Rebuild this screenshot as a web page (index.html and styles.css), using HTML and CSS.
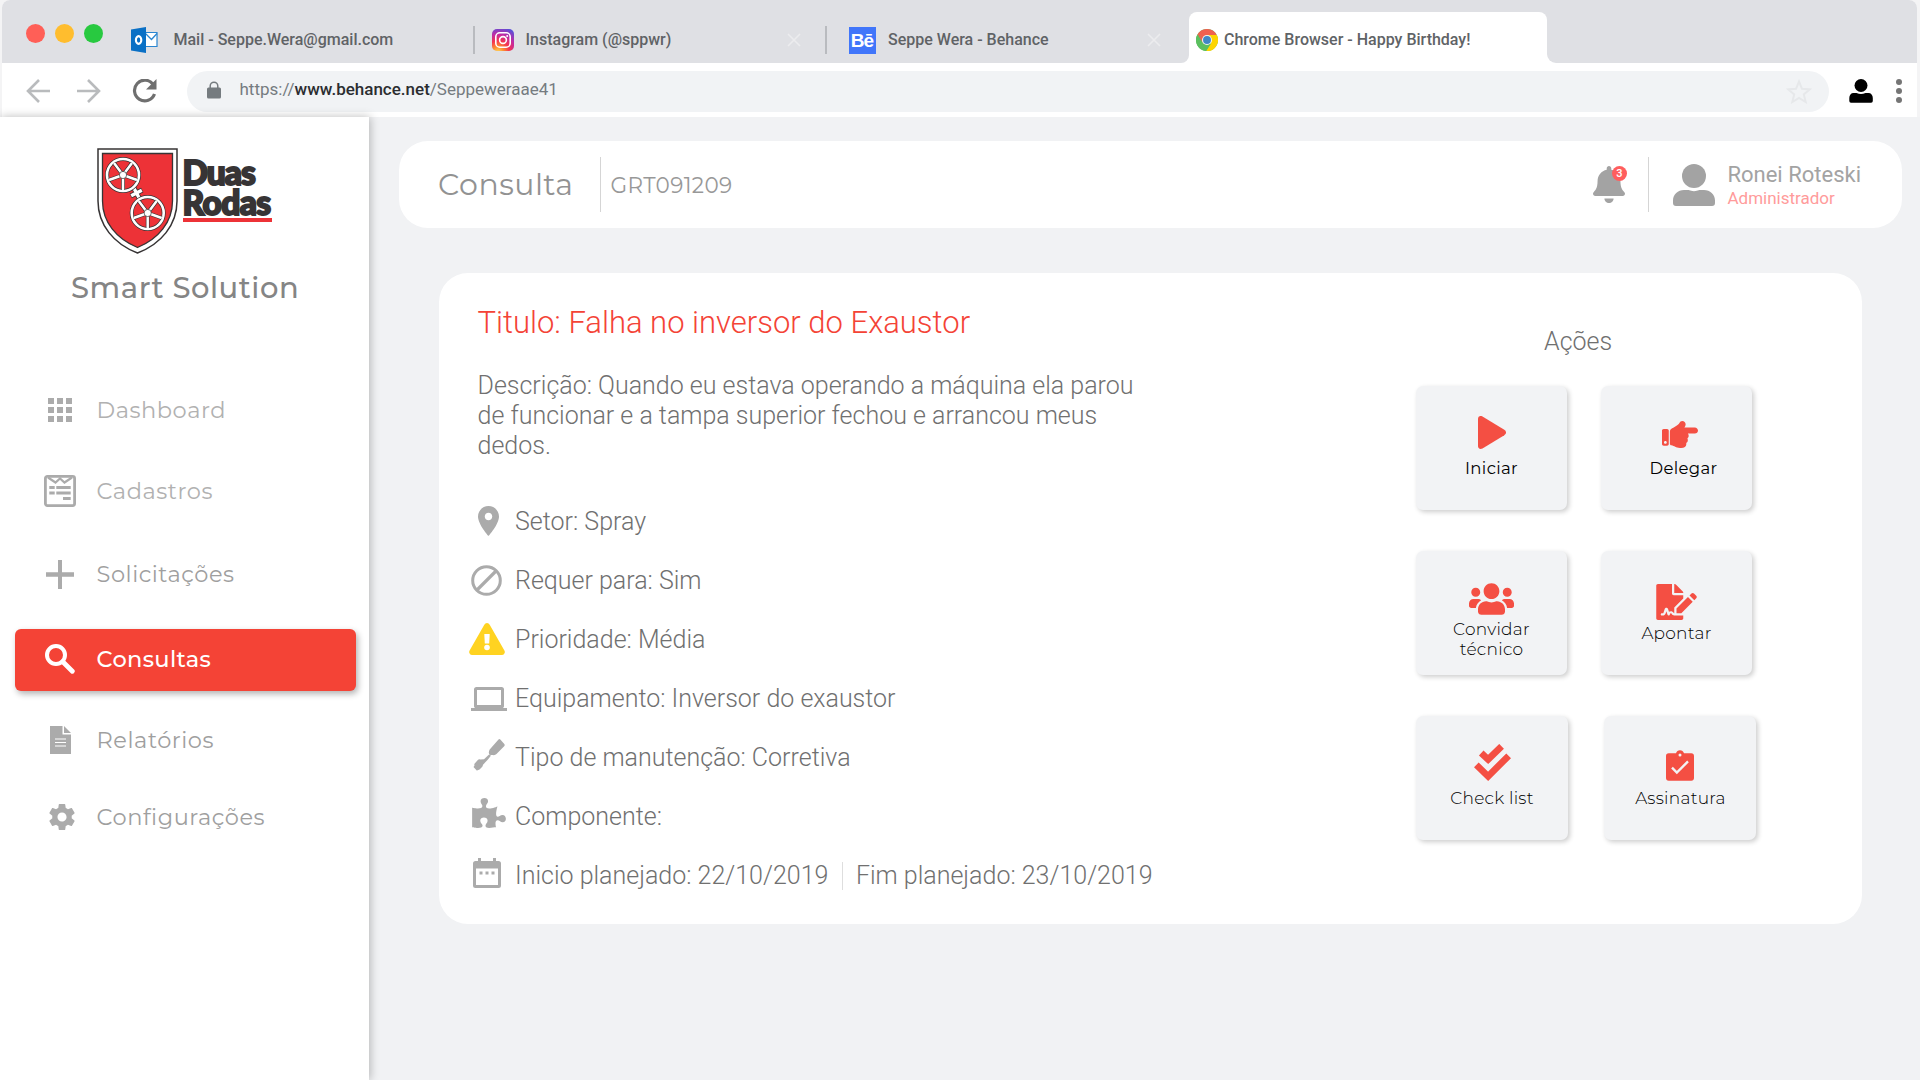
FILE: index.html
```html
<!DOCTYPE html>
<html lang="pt-BR">
<head>
<meta charset="utf-8">
<title>Smart Solution - Consulta</title>
<link rel="stylesheet" href="styles.css">
</head>
<body>
<header class="browser">
  <div class="tabstrip">
    <div class="tabs-left">
      <div class="lights"><i class="light red"></i><i class="light yellow"></i><i class="light green"></i></div>
      <div class="tab tab-mail">
        <svg width="27" height="26" viewBox="0 0 27 26"><path d="M14 5.500h12v14H14z" fill="#fff" stroke="#2a86d1" stroke-width="1.200"/><path d="M14.500 6.500l6 6 5.500-6" fill="none" stroke="#2a86d1" stroke-width="1.300"/><path d="M0 2.500L15 0v26L0 23.500z" fill="#0a70c5"/><ellipse cx="7.600" cy="13" rx="2.700" ry="3.900" fill="none" stroke="#fff" stroke-width="2.100"/></svg>
        <span>Mail - Seppe.Wera@gmail.com</span>
      </div>
      <i class="tab-sep"></i>
      <div class="tab tab-insta">
        <svg width="22" height="22" viewBox="0 0 22 22"><defs><radialGradient id="ig" cx=".28" cy="1.050" r="1.150"><stop offset="0" stop-color="#ffd95a"/><stop offset=".22" stop-color="#fd8d32"/><stop offset=".45" stop-color="#f5344f"/><stop offset=".7" stop-color="#c32aa3"/><stop offset="1" stop-color="#5a4fd8"/></radialGradient></defs><rect width="22" height="22" rx="5" fill="url(#ig)"/><rect x="3.800" y="3.800" width="14.400" height="14.400" rx="4" fill="none" stroke="#fff" stroke-width="1.600"/><circle cx="11" cy="11" r="3.400" fill="none" stroke="#fff" stroke-width="1.600"/><circle cx="15.200" cy="6.900" r="1" fill="#fff"/></svg>
        <span>Instagram (@sppwr)</span>
        <svg class="close" width="14" height="14" viewBox="0 0 14 14"><path d="M1 1l12 12M13 1L1 13"/></svg>
      </div>
      <i class="tab-sep"></i>
      <div class="tab tab-behance">
        <b class="behance">Bē</b>
        <span>Seppe Wera - Behance</span>
        <svg class="close" width="14" height="14" viewBox="0 0 14 14"><path d="M1 1l12 12M13 1L1 13"/></svg>
      </div>
    </div>
    <div class="tab-active">
      <svg width="22" height="22" viewBox="0 0 48 48"><circle cx="24" cy="24" r="24" fill="#5bbf5f"/><path d="M24 24L3.200 12A24 24 0 0 1 44.800 12z" fill="#f0604f"/><path d="M24 13h21.300A24 24 0 0 1 22 48l11-18z" fill="#fdd400"/><path d="M3.200 12L14 30l10-6z" fill="#f0604f"/><path d="M3.200 12A24 24 0 0 0 22 48l11-17-19-2z" fill="#5bbf5f"/><circle cx="24" cy="24" r="11" fill="#f1f1f1"/><circle cx="24" cy="24" r="8.600" fill="#3f87c6"/></svg>
      <span>Chrome Browser - Happy Birthday!</span>
    </div>
    <div class="tabs-right"></div>
  </div>
  <div class="toolbar">
    <svg class="nav-back" width="24" height="24" viewBox="0 0 24 24"><path d="M24 12H2M13 1L2 12l11 11"/></svg>
    <svg class="nav-fwd" width="24" height="24" viewBox="0 0 24 24"><path d="M0 12h22M11 1l11 11-11 11"/></svg>
    <svg class="nav-reload" width="25" height="24" viewBox="0 0 25 24"><path d="M21.200 5.500A10.300 10.300 0 1 0 22.500 15" fill="none" stroke="#6f6f6f" stroke-width="3.200"/><path d="M24.500 0v10.500H14z" fill="#6f6f6f"/></svg>
    <div class="address">
      <svg width="14" height="18" viewBox="0 0 14 18"><rect y="6.500" width="14" height="11" rx="1.500" fill="#757b7f"/><path d="M3.200 8V5a3.800 3.800 0 0 1 7.600 0v3" fill="none" stroke="#757b7f" stroke-width="1.500"/></svg>
      <span class="url">https://<b>www.behance.net</b>/Seppeweraae41</span>
      <svg class="star" width="26" height="25" viewBox="0 0 26 25"><path d="M13 2.500l3 7.300 7.700.6-5.900 5 1.900 7.600L13 18.900 6.300 23l1.900-7.600-5.900-5 7.700-.6z" fill="none" stroke="#e6e8ea" stroke-width="2"/></svg>
    </div>
    <svg class="profile" width="24" height="24" viewBox="0 0 24 24"><ellipse cx="12" cy="6.500" rx="6.500" ry="6.500"/><path d="M4.500 14h3c3 1.300 6 1.300 9 0h3C22 14 23.800 16 23.800 19v3a1.700 1.700 0 0 1-1.700 1.700H2A1.700 1.700 0 0 1 .3 22v-3C.3 16 2 14 4.500 14z"/></svg>
    <svg class="dots" width="6" height="24" viewBox="0 0 6 24"><circle cx="3" cy="3" r="3"/><circle cx="3" cy="12" r="3"/><circle cx="3" cy="21" r="3"/></svg>
  </div>
</header>
<div class="app">
  <aside class="sidebar">
    <div class="logo">
      <svg width="82" height="106" viewBox="0 0 82 106">
        <path d="M1 1h79v52c0 24-16 43-39.500 52C17 96 1 77 1 53z" fill="#fff" stroke="#373435" stroke-width="1.500"/>
        <path d="M5.500 5.500h70V53c0 21-14 38-35 46.500C19.500 91 5.500 74 5.500 53z" fill="#ed3237" stroke="#373435" stroke-width="1.300"/>
        <g transform="translate(39.500 45) rotate(-28)"><path d="M0-6.500V6.500M-6.500 0H6.500" stroke="#373435" stroke-width="5"/><path d="M0-6V6M-6 0H6" stroke="#fff" stroke-width="3.400"/></g>
        <g id="wheel" fill="none">
          <circle cx="26" cy="27" r="16" stroke="#373435" stroke-width="4"/><circle cx="26" cy="27" r="16" stroke="#fff" stroke-width="2.600"/>
          <path d="M26 27v15M26 27l14 5M26 27l9-12M26 27l-9-12M26 27l-14 5" stroke="#373435" stroke-width="3.800"/>
          <path d="M26 27v15M26 27l14 5M26 27l9-12M26 27l-9-12M26 27l-14 5" stroke="#fff" stroke-width="2.500"/>
          <circle cx="26" cy="27" r="3.600" fill="#fff" stroke="#373435" stroke-width=".7"/>
        </g>
        <use href="#wheel" x="24.700" y="38"/>
      </svg>
      <div class="wordmark"><span class="duas">Duas</span><span class="rodas">Rodas</span></div>
    </div>
    <div class="product">Smart Solution</div>
    <nav class="menu">
      <a class="item dashboard"><span class="ico"><svg width="24" height="24" viewBox="0 0 24 24"><path d="M0 0h6v6H0zM9 0h6v6H9zM18 0h6v6h-6zM0 9h6v6H0zM9 9h6v6H9zM18 9h6v6h-6zM0 18h6v6H0zM9 18h6v6H9zM18 18h6v6h-6z"/></svg></span>Dashboard</a>
      <a class="item cadastros"><span class="ico"><svg width="32" height="32" viewBox="0 0 32 32"><rect x="1.400" y="1.400" width="29.200" height="29.200" rx="2" fill="none" stroke="#ababab" stroke-width="2.800"/><path d="M4 2.500l7.500 5L16 3.500l4.500 4L28 2.500" fill="none" stroke="#ababab" stroke-width="2.200"/><path d="M5.300 11h5.400v3H5.300zM12.300 11h14.400v3H12.300zM5.300 16.500h5.400v3H5.300zM12.300 16.500h14.400v3H12.300zM19 22h7.700v3H19z"/></svg></span>Cadastros</a>
      <a class="item solicitacoes"><span class="ico"><svg width="28" height="29" viewBox="0 0 28 29"><path d="M12 0h4v12.300h12v4.400H16V29h-4V16.700H0v-4.400h12z"/></svg></span>Solicitações</a>
      <a class="item active"><span class="ico"><svg width="30" height="30" viewBox="0 0 30 30"><circle cx="11" cy="11" r="9" fill="none" stroke="#fff" stroke-width="4"/><path d="M17.800 17.800L27.300 27.300" stroke="#fff" stroke-width="4.800" stroke-linecap="round"/></svg></span>Consultas</a>
      <a class="item relatorios"><span class="ico"><svg width="21" height="28" viewBox="0 0 21 28"><path d="M0 0h12.500v8.500H21V28H0z"/><path d="M14 0l7 7h-7z"/><path d="M5 13h11M5 16.500h11M5 20h11" stroke="#fff" stroke-width="1.200"/></svg></span>Relatórios</a>
      <a class="item config"><span class="ico"><svg width="26" height="26" viewBox="2.200 2 19.600 20"><path d="M19.430 12.980c.04-.32.07-.64.07-.98s-.03-.66-.07-.98l2.110-1.650c.19-.15.24-.42.12-.64l-2-3.460c-.12-.22-.39-.3-.61-.22l-2.490 1c-.52-.4-1.080-.73-1.690-.98l-.38-2.650C14.460 2.180 14.250 2 14 2h-4c-.25 0-.46.18-.49.42l-.38 2.650c-.61.25-1.170.59-1.690.98l-2.490-1c-.23-.09-.49 0-.61.22l-2 3.460c-.13.22-.07.49.12.64l2.110 1.650c-.04.32-.07.65-.07.98s.03.66.07.98l-2.110 1.650c-.19.15-.24.42-.12.64l2 3.460c.12.22.39.3.61.22l2.490-1c.52.4 1.080.73 1.690.98l.38 2.650c.03.24.24.42.49.42h4c.25 0 .46-.18.49-.42l.38-2.650c.61-.25 1.170-.59 1.690-.98l2.490 1c.23.09.49 0 .61-.22l2-3.460c.12-.22.07-.49-.12-.64l-2.110-1.650zM12 15.500c-1.930 0-3.500-1.570-3.500-3.500s1.570-3.500 3.500-3.500 3.500 1.570 3.500 3.500-1.570 3.500-3.500 3.500z"/></svg></span>Configurações</a>
    </nav>
  </aside>
  <main class="content">
    <section class="topbar">
      <h1>Consulta</h1>
      <i class="divider"></i>
      <span class="ticket">GRT091209</span>
      <div class="bell">
        <svg width="32" height="37" viewBox="0 0 448 512" preserveAspectRatio="none"><path d="M224 512c35.320 0 63.970-28.650 63.970-64H160.030c0 35.350 28.650 64 63.970 64z"/><path d="M439.390 362.290c-19.320-20.760-55.470-51.990-55.470-154.290 0-77.700-54.480-139.900-127.940-155.160V32c0-17.670-14.320-32-31.980-32s-31.980 14.330-31.980 32v20.840C118.560 68.100 64.080 130.300 64.080 208c0 102.300-36.150 133.530-55.470 154.290-6 6.450-8.660 14.160-8.610 21.710.11 16.400 12.980 32 32.100 32h383.800c19.120 0 32-15.600 32.100-32 .05-7.550-2.610-15.270-8.610-21.710z"/></svg>
        <span class="badge">3</span>
      </div>
      <i class="divider"></i>
      <svg class="avatar" width="42" height="42" viewBox="0 0 42 42"><circle cx="21" cy="12" r="12"/><path d="M11 26h4.500c3.600 1.500 7.400 1.500 11 0H31c6 0 11 4.500 11 10.500V39a3 3 0 0 1-3 3H3a3 3 0 0 1-3-3v-2.500C0 30.500 5 26 11 26z"/></svg>
      <div class="user"><span class="name">Ronei Roteski</span><span class="role">Administrador</span></div>
    </section>
    <section class="card">
      <div class="details">
        <h2>Titulo: Falha no inversor do Exaustor</h2>
        <p>Descrição: Quando eu estava operando a máquina ela parou<br>de funcionar e a tampa superior fechou e arrancou meus<br>dedos.</p>
        <ul>
          <li><span class="ico shift-left-s"><svg width="21" height="30" viewBox="5 2 14 20"><path d="M12 2C8.130 2 5 5.130 5 9c0 5.250 7 13 7 13s7-7.750 7-13c0-3.870-3.130-7-7-7zm0 9.500c-1.380 0-2.500-1.120-2.500-2.500s1.120-2.500 2.500-2.500 2.500 1.120 2.500 2.500-1.120 2.500-2.500 2.500z"/></svg></span>Setor: Spray</li>
          <li><span class="ico shift-left"><svg width="31" height="31" viewBox="0 0 31 31"><g fill="none" stroke="#ababab"><circle cx="15.500" cy="15.500" r="13.800" stroke-width="3"/><path d="M6 25L25 6" stroke-width="3.200"/></g></svg></span>Requer para: Sim</li>
          <li><span class="ico shift-left raise-s"><svg width="36" height="32" viewBox="0 0 36 32"><path d="M15.300 1.700a3.100 3.100 0 0 1 5.400 0L35.400 27.500A3 3 0 0 1 32.800 32H3.200A3 3 0 0 1 .6 27.500z" fill="#ffd321"/><path d="M15.300 11h5.400l-.5 9.500h-4.400z" fill="#fff"/><circle cx="18" cy="24.500" r="2.800" fill="#fff"/></svg></span>Prioridade: Média</li>
          <li><span class="ico"><svg width="36" height="24" viewBox="0 0 36 24"><path d="M5.500 0h25A2.500 2.500 0 0 1 33 2.500V18.500A2.500 2.500 0 0 1 32 21h4v3H0v-3h4a2.500 2.500 0 0 1-1-2.500v-16A2.500 2.500 0 0 1 5.500 0zM6 3v15h24V3z" fill-rule="evenodd"/></svg></span>Equipamento: Inversor do exaustor</li>
          <li><span class="ico raise"><svg width="32" height="32" viewBox="0 0 32 32"><path d="M25.500.5q1-.8 1.800 0l4 4.500q.7 1 .1 2L23.500 15q-1.500 1.500-3.800 1H17.500q-1.800-.6-1.700-2.500.1-1.600.9-3z"/><path d="M16.300 15.300l1.600 1.500-3 3.700q-.6.800-1.400 1.600L10 25.700q-.2 1.600-1.200 2.500L6.500 30.500q-.7.700-1.300.2L4 31.800.5 28l1-1.500Q1 25.300 1.700 24.500L4.600 21.200Q5.800 20 7.500 20.500l3.500-.2z"/></svg></span>Tipo de manutenção: Corretiva</li>
          <li><span class="ico raise-more"><svg width="34" height="30" viewBox="0 0 576 512"><path d="M519.442 288.651c-41.519 0-59.500 31.593-82.058 31.593C377.409 320.244 432 144 432 144s-196.288 80-196.288-3.297c0-35.827 36.288-46.250 36.288-85.985C272 19.216 243.885 0 210.539 0c-34.654 0-66.366 18.891-66.366 56.346 0 41.364 31.711 59.277 31.711 81.750C175.885 207.719 0 166.758 0 166.758v333.237s178.635 41.047 178.635-28.662c0-22.473-40-40.107-40-81.471 0-37.456 29.250-56.346 63.577-56.346 33.673 0 61.788 19.216 61.788 54.717 0 39.735-36.288 50.158-36.288 85.985 0 60.803 129.675 25.730 181.230 25.730 0 0-34.725-120.101 25.827-120.101 35.962 0 46.423 36.152 86.308 36.152C556.712 416 576 387.990 576 354.443c0-34.199-18.962-65.792-56.558-65.792z"/></svg></span>Componente:</li>
          <li><span class="ico shift-left raise"><svg width="28" height="30" viewBox="0 0 28 30"><path d="M5 0h3v3h12V0h3v3h2.500A2.500 2.500 0 0 1 28 5.500v22a2.500 2.500 0 0 1-2.500 2.500h-23A2.500 2.500 0 0 1 0 27.500v-22A2.500 2.500 0 0 1 2.500 3H5zM3 10.500V27h22V10.500zM6.500 13.500h3v3h-3zM12.500 13.500h3v3h-3zM18.500 13.500h3v3h-3z" fill-rule="evenodd"/></svg></span>Inicio planejado: 22/10/2019<i class="date-sep"></i>Fim planejado: 23/10/2019</li>
        </ul>
      </div>
      <div class="actions">
        <h3>Ações</h3>
        <div class="grid">
          <button class="act iniciar"><svg width="28" height="33" viewBox="0 0 28 33"><path d="M0 3C0 .5 2 -.6 4.500.6L26.300 13.800c2.300 1.400 2.300 4 0 5.400L4.500 32.400C2 33.600 0 32.500 0 30z"/></svg><span>Iniciar</span></button>
          <button class="act delegar"><svg width="36" height="27" viewBox="0 64 512 384"><path d="M512 199.652c0 23.625-20.650 43.826-44.800 43.826h-99.851c16.340 17.048 18.346 49.766-6.299 70.944 14.288 22.829 2.147 53.017-16.450 62.315C353.574 425.878 322.654 448 272 448c-2.746 0-13.276-.203-16-.195-61.971.168-76.894-31.065-123.731-38.315C120.596 407.683 112 397.599 112 385.786V214.261l.002-.001c.011-18.366 10.607-35.889 28.464-43.845 28.886-12.994 95.413-49.038 107.534-77.323 7.797-18.194 21.384-29.084 40-29.092 34.222-.014 57.752 35.098 44.119 66.908-3.583 8.359-8.312 16.670-14.153 24.918H467.200c23.450 0 44.800 20.543 44.800 43.826zM96 200v192c0 13.255-10.745 24-24 24H24c-13.255 0-24-10.745-24-24V200c0-13.255 10.745-24 24-24h48c13.255 0 24 10.745 24 24zM68 368c0-11.046-8.954-20-20-20s-20 8.954-20 20 8.954 20 20 20 20-8.954 20-20z"/></svg><span>Delegar</span></button>
          <button class="act thin convidar"><svg width="45" height="32" viewBox="0 32 640 448"><path d="M96 224c35.300 0 64-28.700 64-64s-28.700-64-64-64-64 28.700-64 64 28.700 64 64 64zm448 0c35.300 0 64-28.700 64-64s-28.700-64-64-64-64 28.700-64 64 28.700 64 64 64zm32 32h-64c-17.600 0-33.500 7.100-45.100 18.600 40.300 22.100 68.900 62 75.100 109.400h66c17.700 0 32-14.300 32-32v-32c0-35.300-28.700-64-64-64zm-256 0c61.900 0 112-50.100 112-112S381.900 32 320 32 208 82.100 208 144s50.100 112 112 112zm76.800 32h-8.300c-20.800 10-43.900 16-68.500 16s-47.600-6-68.500-16h-8.300C179.600 288 128 339.600 128 403.200V432c0 26.500 21.500 48 48 48h288c26.500 0 48-21.500 48-48v-28.800c0-63.600-51.600-115.200-115.200-115.200zm-223.700-13.400C161.500 263.100 145.600 256 128 256H64c-35.300 0-64 28.700-64 64v32c0 17.700 14.300 32 32 32h65.900c6.300-47.400 34.900-87.300 75.200-109.400z"/></svg><span>Convidar<br>técnico</span></button>
          <button class="act thin apontar"><svg width="41" height="36" viewBox="0 0 576 512"><path d="M218.170 424.140c-2.950-5.920-8.090-6.520-10.170-6.520s-7.220.59-10.020 6.190l-7.670 15.340c-6.370 12.780-25.030 11.370-29.480-2.090L144 386.590l-10.610 31.880c-5.890 17.660-22.380 29.530-41 29.530H80c-8.840 0-16-7.160-16-16s7.160-16 16-16h12.390c4.830 0 9.110-3.080 10.640-7.660l18.190-54.640c3.300-9.810 12.440-16.410 22.780-16.410s19.480 6.590 22.770 16.410l13.880 41.640c19.750-16.190 54.060-9.700 66 14.160 1.890 3.780 5.490 5.950 9.360 6.260v-82.120l128-127.090V160H248c-13.200 0-24-10.800-24-24V0H24C10.700 0 0 10.700 0 24v464c0 13.300 10.700 24 24 24h336c13.300 0 24-10.700 24-24v-40l-128-.11c-16.120-.31-30.580-9.280-37.830-23.750zM384 121.900c0-6.300-2.500-12.400-7-16.900L279.100 7c-4.500-4.500-10.600-7-17-7H256v128h128v-6.100zm-96 225.060V416h68.990l161.680-162.780-67.880-67.880L288 346.960zm280.540-179.630l-31.870-31.870c-9.940-9.940-26.070-9.940-36.010 0l-27.250 27.250 67.880 67.880 27.250-27.250c9.950-9.940 9.950-26.070 0-36.010z"/></svg><span>Apontar</span></button>
          <button class="act thin checklist"><svg width="37" height="37" viewBox="222 192 110 110"><g fill="none" stroke="#f44f43" stroke-width="20" stroke-linejoin="miter"><path d="M229 254l35 34 61-61M243.500 219l20.500 19 40-39"/></g></svg><span>Check list</span></button>
          <button class="act thin assinatura"><svg width="28" height="31" viewBox="798 211 84 91"><path d="M806 220h22c2-5 6-9 12-9s10 4 12 9h22c5 0 8 3 8 8v66c0 5-3 8-8 8h-68c-5 0-8-3-8-8v-66c0-5 3-8 8-8z"/><circle cx="840" cy="225" r="4.500" fill="#f2f3f5"/><path d="M816 263l14.500 15L864 244" fill="none" stroke="#f2f3f5" stroke-width="7"/></svg><span>Assinatura</span></button>
        </div>
      </div>
    </section>
  </main>
</div>
</body>
</html>
```
FILE: styles.css
```css
* { box-sizing: border-box; }
body { margin: 0; width: 1920px; height: 1080px; overflow: hidden; background: #f1f2f4; font-family: Roboto, "Open Sans", sans-serif; display: flex; flex-direction: column; }
svg { display: block; flex: none; }
i { display: block; flex: none; }

/* Browser frame */
.browser { height: 117px; padding: 0 3px 0 2px; background: #f4f4f5; flex: none; }
.tabstrip { display: flex; height: 63px; background: #fff; color: #5f6366; font-size: 16px; font-weight: 500; border-radius: 8px 8px 0 0; }
.tabs-left { width: 1186.500px; background: #dfe0e4; border-radius: 8px 0 8px 0; display: flex; align-items: center; padding-top: 17px; white-space: nowrap; flex: none; }
.tabs-right { flex: 1; background: #dfe0e4; border-radius: 0 8px 0 9px; }
.lights { display: flex; gap: 10px; margin: -13px 28px 0 24px; }
.light { width: 19px; height: 19px; border-radius: 50%; }
.red { background: #ff5f57; }
.yellow { background: #ffbd2e; }
.green { background: #28c940; }
.tab { display: flex; align-items: center; }
.tab span, .tab-active span { margin-top: -2px; }
.tab-mail { gap: 15.500px; width: 342px; }
.tab-insta { gap: 11.500px; width: 333px; margin-left: 17.500px; }
.tab-behance { gap: 12.500px; margin-left: 22px; }
.tab-sep { width: 1.500px; height: 28px; background: #b9bbbf; }
.close { fill: none; stroke: #ececee; stroke-width: 1.600; }
.tab-insta .close { margin-left: 104px; }
.tab-behance .close { margin-left: 86px; }
.behance { width: 27px; height: 27px; background: #4176fa; color: #fff; font: 700 19px/27px "Liberation Sans", Arial, sans-serif; letter-spacing: -0.8px; text-align: center; }
.tab-active { width: 358px; display: flex; align-items: center; gap: 6px; padding: 17px 0 0 7.500px; background: #fff linear-gradient(#dfe0e4, #dfe0e4) top / 100% 20px no-repeat; position: relative; flex: none; }
.tab-active::before { content: ""; position: absolute; inset: 12px 0 0; background: #fff; border-radius: 8px 8px 0 0; }
.tab-active > * { position: relative; }
.toolbar { display: flex; align-items: center; height: 54px; background: #fff; padding: 2px 14px 0 24px; }
.nav-back, .nav-fwd { fill: none; stroke: #b9bbbd; stroke-width: 2.600; }
.nav-fwd { margin-left: 27px; }
.nav-reload { margin-left: 31px; }
.address { margin-left: 29.500px; width: 1642px; height: 41px; border-radius: 21px; background: #f1f3f5; display: flex; align-items: center; padding: 0 17px 0 20px; }
.address svg { margin-top: -2px; }
.address .star { margin: 0 0 0 auto; }
.url { margin: -5px 0 0 19px; font-size: 17px; color: #757b80; }
.url b { font-weight: 500; color: #2b2d30; }
.profile { margin-left: 20px; }
.dots { margin-left: 23px; fill: #757575; }

/* App shell */
.app { flex: 1; display: flex; min-height: 0; }
.sidebar { width: 369px; background: #fff; box-shadow: 1px 0 9px rgba(0, 0, 0, .27); flex: none; padding-top: 31px; position: relative; }
.logo { display: flex; gap: 4px; padding-left: 96.500px; }
.wordmark { width: 89px; height: 74px; padding-top: 9px; border-bottom: 4px solid #ed3237; font: 900 33.500px/30px Lato, "Open Sans", sans-serif; color: #373435; -webkit-text-stroke: 2px #373435; display: flex; flex-direction: column; }
.duas { letter-spacing: -1px; }
.rodas { letter-spacing: -.6px; }
.product { margin-top: 17px; padding-left: 71px; font: 500 29px/34px Montserrat, Inter, sans-serif; letter-spacing: .55px; color: #858585; }
.menu { margin: 74px 13px 0 15px; display: flex; flex-direction: column; fill: #ababab; color: #9f9f9f; }
.item { height: 62px; display: flex; align-items: center; gap: 20.500px; padding-left: 29px; border-radius: 6px; font: 400 22.500px/62px Montserrat, Inter, sans-serif; letter-spacing: .55px; }
.item .ico { width: 32px; display: flex; justify-content: center; }
.dashboard, .cadastros { color: #b1b1b1; }
.cadastros { margin-top: 19px; }
.solicitacoes { margin-top: 21px; }
.active { margin-top: 24px; padding-bottom: 2px; background: #f44336; color: #fff; font-weight: 500; letter-spacing: .35px; line-height: 60px; box-shadow: 2px 3px 6px rgba(0, 0, 0, .3); }
.relatorios { margin-top: 18px; }
.config { margin-top: 15px; }
.config .ico { padding-left: 4px; }

.content { flex: 1; padding: 24px 18px 0 30px; }
.topbar { height: 87px; background: #fff; border-radius: 29px; display: flex; align-items: center; padding-left: 39px; color: #989898; }
h1 { margin: 0; width: 162px; font: 400 30px/40px Montserrat, Inter, sans-serif; letter-spacing: .5px; color: #929292; }
.divider { width: 1px; height: 55px; background: #d5d5d5; }
.ticket { margin: 0 0 0 9.500px; font: 400 21.500px/30px Montserrat, Inter, sans-serif; letter-spacing: .4px; }
.bell { margin-left: auto; position: relative; fill: #a3a3a3; }
.badge { position: absolute; left: 19px; top: 0; width: 15px; height: 15px; border-radius: 50%; background: #ff5e5e; color: #fff; font: 500 11px/15px Roboto, sans-serif; text-align: center; }
.bell + .divider { margin-left: 23px; }
.avatar { margin-left: 24.500px; fill: #a3a3a3; }
.user { margin: 0 41px 0 12px; display: flex; flex-direction: column; }
.name { font-size: 22px; line-height: 26px; color: #a3a3a3; }
.role { font-size: 17px; line-height: 20px; color: #ff9b9b; }

.card { margin: 45px 40px 0; width: 1423px; height: 651px; border-radius: 29px; background: #fff; color: #707070; font-size: 25px; font-weight: 300; display: flex; }
.details { width: 977px; padding: 31px 0 0 30px; fill: #ababab; }
h2 { margin: 0 0 0 8.500px; font-size: 31px; line-height: 38px; font-weight: 300; color: #f44336; }
p { margin: 29px 0 0 8.500px; line-height: 30px; }
ul { list-style: none; margin: 31px 0 0; padding: 0; }
li { height: 59px; display: flex; align-items: center; }
li .ico { width: 40px; margin-right: 6px; display: flex; justify-content: center; }
li .shift-left { padding-right: 5px; }
li .shift-left-s { padding: 0 1px 2px 0; }
li .raise-s { padding-bottom: 2px; }
li .raise { padding-bottom: 5px; }
li .raise-more { padding-bottom: 7px; }
.date-sep { width: 1px; height: 28px; background: #dedede; margin: 0 12.500px 0 14px; }

.actions { padding-top: 54px; }
h3 { margin: 0 0 0 128px; font-size: 25px; line-height: 30px; font-weight: 300; }
.grid { margin-top: 29px; display: grid; grid-template: repeat(3, 124px) / 151px 151px; gap: 41px 34px; }
.act { border: 0; border-radius: 7px; background: #f2f3f5; box-shadow: 2px 2px 5px rgba(0, 0, 0, .2); display: flex; flex-direction: column; align-items: center; padding: 0; fill: #f44f43; color: #000; font: 400 16.500px/20px Montserrat, Inter, sans-serif; letter-spacing: .35px; }
.act.thin { font-weight: 300; font-size: 17px; letter-spacing: .25px; }
.iniciar { padding-top: 30px; }
.iniciar span { margin-top: 9px; }
.delegar { padding: 35px 0 0 7px; }
.delegar span { margin: 10px 0 0 7px; }
.convidar { padding-top: 32px; }
.convidar span { margin-top: 4px; }
.apontar { padding-top: 33px; }
.apontar span { margin-top: 3px; }
.checklist { width: 152px; padding-top: 28px; }
.checklist span { margin-top: 7px; }
.assinatura { width: 152px; margin-left: 3px; padding-top: 34px; }
.assinatura span { margin: 7px 0 0 1px; }
```
